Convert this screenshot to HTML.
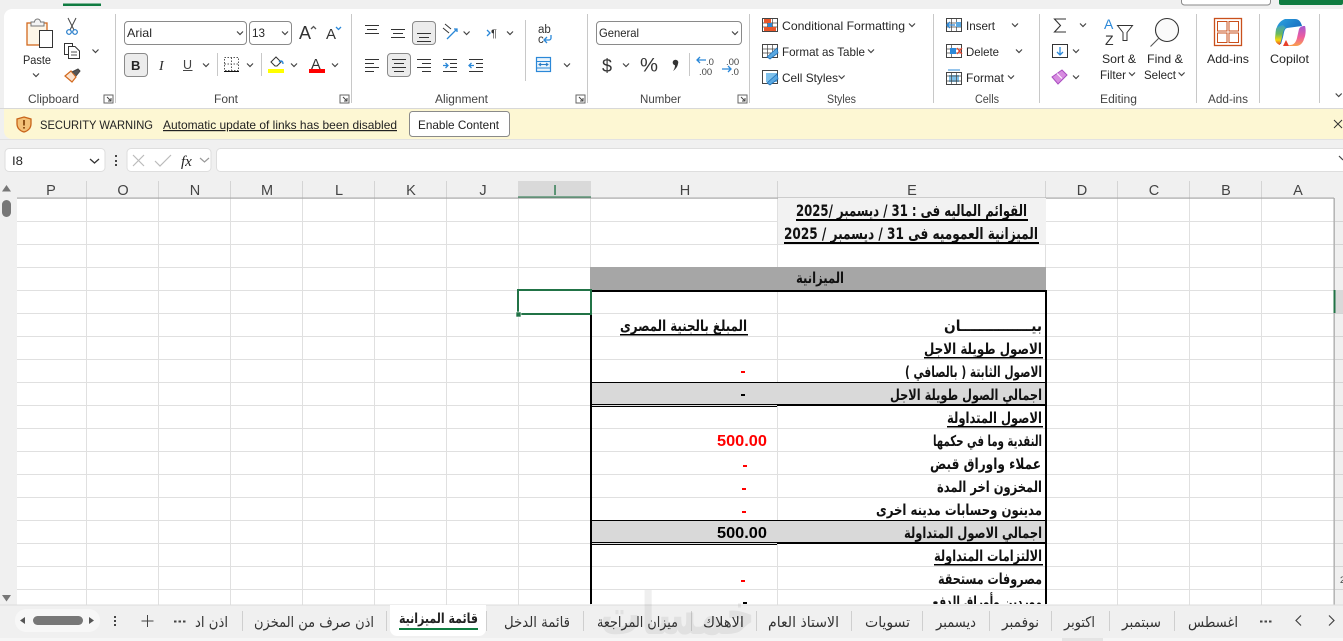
<!DOCTYPE html>
<html lang="en"><head><meta charset="utf-8"><title>Excel</title>
<style>
html,body{margin:0;padding:0;width:1343px;height:641px;overflow:hidden;background:#f0f0f0}
svg{display:block;position:absolute;left:0;top:0}
text{font-family:"Liberation Sans","DejaVu Sans",sans-serif;fill:#262626;font-size:12px}
.g{fill:#444;font-size:11.5px}
.h{fill:#444;font-size:14.5px;text-anchor:middle}
.a{font-family:"DejaVu Sans","Liberation Sans",sans-serif;font-weight:bold;fill:#111;font-size:15px;direction:rtl;text-anchor:start;unicode-bidi:plaintext}
.t{font-family:"DejaVu Sans","Liberation Sans",sans-serif;fill:#333;font-size:14.5px;direction:rtl;text-anchor:start}
.n{font-family:"Liberation Sans",sans-serif;font-weight:bold;font-size:15.5px}
.l{stroke:#333;stroke-width:1;fill:none}
.b{stroke:#2b88d8;stroke-width:1.3;fill:none}
.c{stroke:#444;stroke-width:1.2;fill:none}
.s{stroke:#c8c8c8;stroke-width:1}
.gr{stroke:#e0e0e0;stroke-width:1}
.hs{stroke:#d4d4d4;stroke-width:1}
.ts{stroke:#cfcfcf;stroke-width:1}
</style></head><body>
<svg width="1343" height="641" viewBox="0 0 1343 641" xmlns="http://www.w3.org/2000/svg">
<defs>
<polyline id="cv" points="-3,-1.5 0,1.5 3,-1.5" class="c"/>
<g id="dl"><rect x="0" y="0" width="9" height="8" fill="none" stroke="#666"/><path d="M3 2l4 4M7 3v3h-3" stroke="#444" fill="none"/></g>
<linearGradient id="cb" x1="0" y1="0" x2="1" y2="1"><stop offset="0" stop-color="#2ca6e0"/><stop offset=".5" stop-color="#1d7ac8"/><stop offset="1" stop-color="#1a5fb0"/></linearGradient>
<linearGradient id="cl" x1="0" y1="0" x2="0" y2="1"><stop offset="0" stop-color="#3aa0c8"/><stop offset=".45" stop-color="#6cba5a"/><stop offset=".75" stop-color="#f4d90e"/><stop offset="1" stop-color="#e8402a"/></linearGradient>
<linearGradient id="cr" x1="0" y1="0" x2="0" y2="1"><stop offset="0" stop-color="#a85ad0"/><stop offset=".55" stop-color="#ee5ca0"/><stop offset="1" stop-color="#f9a04a"/></linearGradient>
<clipPath id="gc"><rect x="0" y="198" width="1343" height="406"/></clipPath>
</defs>

<!-- top strip -->
<rect width="1343" height="9" fill="#f0f0f0"/>
<rect x="63" y="3.500" width="38" height="2.500" fill="#107c41"/>
<rect x="1181.500" y="-6" width="89" height="11" rx="3" fill="#fff" stroke="#8a8a8a"/>
<rect x="1279" y="-4" width="64" height="9" rx="2" fill="#107c41"/>

<!-- ribbon -->
<path d="M4 108V17a8 8 0 0 1 8-8H1343V108Z" fill="#fff"/>
<rect x="0" y="108" width="1343" height="1" fill="#d8d8d8"/>
<path d="M4 109H1343V139H12a8 8 0 0 1-8-8Z" fill="#fdf7d3"/>
<rect x="0" y="139" width="1343" height="1" fill="#e2e2e2"/>

<!-- separators -->
<path class="s" d="M115.500 14V103M351.500 14V103M587.500 14V103M749.500 14V103M933.500 14V103M1039.500 14V103M1196.500 14V103M1259.500 14V103M1319.500 14V103"/>
<path class="s" d="M217.500 53V76M261.500 53V76M525.500 20V81M689.500 53V76"/>

<!-- Group labels -->
<text class="g" x="28" y="103" textLength="51" lengthAdjust="spacingAndGlyphs">Clipboard</text>
<text class="g" x="214" y="103" textLength="24" lengthAdjust="spacingAndGlyphs">Font</text>
<text class="g" x="435" y="103" textLength="53" lengthAdjust="spacingAndGlyphs">Alignment</text>
<text class="g" x="640" y="103" textLength="41" lengthAdjust="spacingAndGlyphs">Number</text>
<text class="g" x="827" y="103" textLength="29" lengthAdjust="spacingAndGlyphs">Styles</text>
<text class="g" x="975" y="103" textLength="24" lengthAdjust="spacingAndGlyphs">Cells</text>
<text class="g" x="1100" y="103" textLength="37" lengthAdjust="spacingAndGlyphs">Editing</text>
<text class="g" x="1208" y="103" textLength="40" lengthAdjust="spacingAndGlyphs">Add-ins</text>
<use href="#dl" x="104" y="95"/><use href="#dl" x="340" y="95"/><use href="#dl" x="576" y="95"/><use href="#dl" x="738" y="95"/>

<!-- Clipboard -->
<rect x="27" y="23" width="20" height="22" fill="#fdf6e8" stroke="#d2691e" stroke-width="1.300"/>
<path d="M31 26v-4h3.500a3 3 0 0 1 6 0H44v4Z" fill="#f4f4f4" stroke="#777"/>
<rect x="39.500" y="30.500" width="13" height="17" fill="#fff" stroke="#333"/>
<text x="23" y="64" textLength="28" lengthAdjust="spacingAndGlyphs">Paste</text>
<use href="#cv" x="36" y="75"/>
<path d="M68 18l6 12M76 18l-6 12" stroke="#444" fill="none"/>
<circle cx="69" cy="32" r="2.300" fill="none" stroke="#1f78c8" stroke-width="1.200"/><circle cx="75" cy="32" r="2.300" fill="none" stroke="#1f78c8" stroke-width="1.200"/>
<path d="M68.500 54.500H64.500V43.500H72.500V46" fill="none" stroke="#333"/>
<path d="M68.500 46.500H75L79.500 51V58.500H68.500Z" fill="#fff" stroke="#333"/><path d="M71 52h6M71 55h6" stroke="#555"/>
<use href="#cv" x="95.500" y="51"/>
<path d="M65 76l6-5 5 6-4 5Z" fill="#fbe3cf" stroke="#d2691e" stroke-width="1.200"/>
<path d="M72 72l6-3 2 2-4 5" fill="#555" stroke="#444"/>

<!-- Font -->
<rect x="124.500" y="21.500" width="122" height="23" rx="3.500" fill="#fff" stroke="#8a8a8a"/>
<text x="127" y="37" textLength="25" lengthAdjust="spacingAndGlyphs" fill="#222">Arial</text><use href="#cv" x="240" y="33"/>
<rect x="249.500" y="21.500" width="42" height="23" rx="3.500" fill="#fff" stroke="#8a8a8a"/>
<text x="252" y="37" textLength="13" lengthAdjust="spacingAndGlyphs">13</text><use href="#cv" x="285" y="33"/>
<text x="299" y="39" style="font-size:18px;fill:#333">A</text><path d="M311 29l2.500-2.500 2.500 2.500" class="b" style="stroke:#555"/>
<text x="326" y="39" style="font-size:15px;fill:#333">A</text><path d="M336 27l2.500 2.500 2.500-2.500" class="b"/>
<rect x="124.500" y="53.500" width="23" height="23" rx="3.500" fill="#ececec" stroke="#8a8a8a"/>
<text x="131" y="70" style="font-size:13px;font-weight:bold">B</text>
<text x="159" y="70" style="font-size:14px;font-style:italic;font-family:'Liberation Serif',serif">I</text>
<text x="183" y="69" style="font-size:12.500px;fill:#444">U</text><path d="M183 70.500h9.500" stroke="#444"/>
<use href="#cv" x="206" y="65"/>
<path d="M224.500 57.500h14v13h-14ZM231.500 57.500v13M224.500 64h14" stroke="#555" stroke-dasharray="1.500 1.500" fill="none"/><path d="M224 71.500h15" stroke="#111"/>
<use href="#cv" x="250" y="65"/>
<path d="M271 62l5-5 5 5-4 4h-2Z" fill="#fff" stroke="#333"/><path d="M279 62c2-2 4-1 4 2" stroke="#2b88d8" stroke-width="1.300" fill="none"/><rect x="268" y="69" width="16" height="4" fill="#ffff00"/>
<use href="#cv" x="294" y="65"/>
<text x="311" y="69" style="font-size:14.500px;fill:#333">A</text><rect x="309" y="69" width="16" height="4" fill="#ff0000"/>
<use href="#cv" x="335" y="65"/>

<!-- Alignment -->
<path class="l" d="M365 25.500h14M367 29.500h10M365 33.500h14"/>
<path class="l" d="M391 29.500h14M393 33.500h10M391 37.500h14"/>
<rect x="412.500" y="21.500" width="23" height="23" rx="3.500" fill="#ececec" stroke="#8a8a8a"/>
<path class="l" d="M417 33.500h14M419 37.500h10M417 41.500h14"/>
<path class="l" d="M443 28l6 5M445 24l6 5" /><path class="b" d="M447 39l10-10M454 29h3v3"/>
<use href="#cv" x="466.600" y="33"/>
<path class="b" d="M487 30l3 3-3 3"/><text x="491" y="37" style="font-size:11px;fill:#333">¶</text>
<use href="#cv" x="510" y="33"/>
<path class="l" d="M365 59.500h14M365 63.500h9M365 67.500h14M365 71.500h9"/>
<rect x="387.500" y="53.500" width="23" height="23" rx="3.500" fill="#ececec" stroke="#8a8a8a"/>
<path class="l" d="M392 59.500h14M394 63.500h10M392 67.500h14M394 71.500h10"/>
<path class="l" d="M417 59.500h14M422 63.500h9M417 67.500h14M422 71.500h9"/>
<path class="l" d="M443 59.500h14M450 63.500h7M450 67.500h7M443 71.500h14"/><path class="b" d="M443 65.500h5M445.500 63l2.500 2.500-2.500 2.500"/>
<path class="l" d="M469 59.500h14M476 63.500h7M476 67.500h7M469 71.500h14"/><path class="b" d="M474 65.500h-5M471.500 63l-2.500 2.500 2.500 2.500"/>
<text x="538" y="33" style="font-size:11.500px;fill:#333">ab</text><text x="538" y="43" style="font-size:11.500px;fill:#333">c</text>
<path class="b" d="M551 35v3a2 2 0 0 1-2 2h-5M547 37l-3 3 3 3"/>
<rect x="536.500" y="57.500" width="14" height="14" fill="#eaf4fc" stroke="#2b88d8" stroke-width="1.200"/><path class="b" d="M536 61.500h15M536 68h15" style="stroke-width:1"/><path d="M539 64.500h9M541 63l-2 1.500 2 1.500M546 63l2 1.500-2 1.500" stroke="#2b7cc4" fill="none"/>
<use href="#cv" x="567" y="65"/>

<!-- Number -->
<rect x="596.500" y="21.500" width="145" height="23" rx="3.500" fill="#fff" stroke="#8a8a8a"/>
<text x="599" y="37" textLength="40" lengthAdjust="spacingAndGlyphs">General</text><use href="#cv" x="735" y="33"/>
<text x="602" y="72" style="font-size:18px;fill:#333">$</text><use href="#cv" x="626" y="65"/>
<text x="640" y="71.500" textLength="18" lengthAdjust="spacingAndGlyphs" style="font-size:19px;fill:#333">%</text>
<circle cx="675.500" cy="62.500" r="2.800" fill="#333"/><path d="M678 63c0 3-2 6-5 8 1.500-2 2-4 2-6Z" fill="#333"/>
<path class="b" d="M706 60h-9M700 57l-3 3 3 3"/><text x="706" y="65" style="font-size:9.500px;fill:#444">.0</text><text x="699" y="75" style="font-size:9.500px;fill:#444">.00</text>
<text x="726" y="65" style="font-size:9.500px;fill:#444">.00</text><path class="b" d="M722 69h9M728 66l3 3-3 3"/><text x="731" y="75" style="font-size:9.500px;fill:#444">.0</text>

<!-- Styles -->
<rect x="762.500" y="18.500" width="15" height="13" fill="#fff" stroke="#444"/><path d="M767.500 18v14M772.500 18v14M762 23h16M762 27h16" stroke="#444" stroke-width=".7"/><rect x="764" y="19" width="7" height="4" fill="#e8562a"/><rect x="764" y="27" width="12" height="4" fill="#e8562a"/><rect x="768" y="23" width="4" height="4" fill="#2b88d8"/>
<text x="782" y="30" textLength="123" lengthAdjust="spacingAndGlyphs">Conditional Formatting</text><use href="#cv" x="912" y="25"/>
<rect x="762.500" y="44.500" width="15" height="13" fill="#fff" stroke="#444"/><path d="M767.500 44v14M772.500 44v14M762 49h16M762 53h16" stroke="#444" stroke-width=".7"/><path d="M767 57l10-9 1 5-8 6Z" fill="#5aa8e0" stroke="#1f70b8" stroke-width=".8"/>
<text x="782" y="56" textLength="83" lengthAdjust="spacingAndGlyphs">Format as Table</text><use href="#cv" x="871" y="51"/>
<rect x="762.500" y="70.500" width="15" height="13" fill="#fff" stroke="#444"/><path d="M766 73h11v9h-11Z" fill="#7ec0ea"/><path d="M767 83l10-9 1 5-8 6Z" fill="#5aa8e0" stroke="#1f70b8" stroke-width=".8"/>
<text x="782" y="82" textLength="56" lengthAdjust="spacingAndGlyphs">Cell Styles</text><use href="#cv" x="841.600" y="77"/>

<!-- Cells -->
<rect x="946.500" y="18.500" width="15" height="13" fill="#fff" stroke="#444"/><path d="M946 23h16M946 27h16M951.500 18v14M956.500 18v14" stroke="#444" stroke-width=".7"/><rect x="956" y="22" width="5" height="5" fill="#5aa8e0"/><path class="b" d="M955 25h-8M950 22l-3 3 3 3"/>
<text x="966" y="30" textLength="29" lengthAdjust="spacingAndGlyphs">Insert</text><use href="#cv" x="1015" y="25"/>
<rect x="946.500" y="44.500" width="15" height="13" fill="#fff" stroke="#444"/><path d="M946 49h16M946 53h16M951.500 44v14" stroke="#444" stroke-width=".7"/><rect x="950" y="48" width="6" height="6" fill="#2b88d8"/><path d="M957 48l5 6M962 48l-5 6" stroke="#e8402a" stroke-width="1.200"/>
<text x="966" y="56" textLength="33" lengthAdjust="spacingAndGlyphs">Delete</text><use href="#cv" x="1019" y="51"/>
<rect x="946.500" y="72.500" width="15" height="12" fill="#fff" stroke="#444"/><rect x="949" y="75" width="10" height="7" fill="#7ec0ea"/><path d="M948 70h12" stroke="#2b88d8"/><path d="M946 76h16M946 81h16M951.500 72v12M956.500 72v12" stroke="#444" stroke-width=".7"/>
<text x="966" y="82" textLength="38" lengthAdjust="spacingAndGlyphs">Format</text><use href="#cv" x="1011" y="77"/>

<!-- Editing -->
<path d="M1066 19h-11.500l6 6.500-6 6.500H1066" fill="none" stroke="#333" stroke-width="1.100"/><use href="#cv" x="1083" y="25"/>
<rect x="1052.500" y="44.500" width="15" height="13" fill="#fff" stroke="#333"/><path class="b" d="M1060 47v8M1057 52l3 3 3-3"/><use href="#cv" x="1076" y="51"/>
<path d="M1052 77l10-7 5 5-9 9Z" fill="#d78ce0" stroke="#a94cc0"/><path d="M1057 73.500l5 5" stroke="#fff"/><use href="#cv" x="1076" y="77"/>
<text x="1104" y="29" style="font-size:14px;fill:#2b88d8">A</text><text x="1105" y="45" style="font-size:14px;fill:#333">Z</text>
<path d="M1117.500 25.500h15l-5.500 7v8h-4v-8Z" fill="#fff" stroke="#333"/>
<text x="1102" y="63" textLength="34" lengthAdjust="spacingAndGlyphs">Sort &amp;</text>
<text x="1100" y="79" textLength="26" lengthAdjust="spacingAndGlyphs">Filter</text><use href="#cv" x="1132" y="74"/>
<circle cx="1167" cy="30" r="11.500" fill="#fafafa" stroke="#333" stroke-width="1.100"/><path d="M1158.500 38.500l-8 8" stroke="#555" stroke-width="1.100"/>
<text x="1147" y="63" textLength="36" lengthAdjust="spacingAndGlyphs">Find &amp;</text>
<text x="1144" y="79" textLength="32" lengthAdjust="spacingAndGlyphs">Select</text><use href="#cv" x="1181.600" y="74"/>

<!-- Add-ins -->
<rect x="1214.500" y="18.500" width="27" height="27" fill="#fff" stroke="#c9501c" stroke-width="1.300"/>
<rect x="1217.500" y="21.500" width="9.500" height="9.500" fill="none" stroke="#c9501c"/><rect x="1229" y="21.500" width="9.500" height="9.500" fill="none" stroke="#c9501c"/><rect x="1217.500" y="33" width="9.500" height="9.500" fill="none" stroke="#c9501c"/><rect x="1229" y="33" width="9.500" height="9.500" fill="none" stroke="#c9501c"/>
<text x="1207" y="63" textLength="42" lengthAdjust="spacingAndGlyphs">Add-ins</text>

<!-- Copilot -->
<path d="M1276 38c-1-8 1-16 9-19h10c4 0 6 3 7 7l-15 2c-3 1-3 5-4 9l-2 7h-3c-1-2-2-4-2-6Z" fill="url(#cb)"/>
<path d="M1276 29c1-2 3-3 7-4l3 3c-3 1-3 5-4 9l-2 8c-3-1-5-3-5-7Z" fill="url(#cl)"/>
<path d="M1290 45c4 0 6-3 7-7l2-9c1-2 3-3 5-3h1c1 3 1 9-1 13-1 4-4 7-8 7h-9l3-1Z" fill="url(#cr)"/>
<path d="M1283 46l3-6 3 6Z" fill="#e8402a"/>
<text x="1270" y="63" textLength="39" lengthAdjust="spacingAndGlyphs">Copilot</text>
<use href="#cv" x="1338.700" y="95"/>

<!-- warning bar -->
<path d="M24 117l7 2v5c0 4-3 7-7 8-4-1-7-4-7-8v-5Z" fill="#f3c178" stroke="#c8641a" stroke-width="1.300"/>
<rect x="23.200" y="120" width="1.600" height="5.500" fill="#7a3b00"/><rect x="23.200" y="127" width="1.600" height="1.600" fill="#7a3b00"/>
<text x="40" y="129" textLength="113" lengthAdjust="spacingAndGlyphs" style="fill:#222">SECURITY WARNING</text>
<text x="163" y="129" textLength="234" lengthAdjust="spacingAndGlyphs" text-decoration="underline" style="fill:#222">Automatic update of links has been disabled</text>
<rect x="409.500" y="111.500" width="100" height="25" rx="3" fill="#fff" stroke="#8a8a8a"/>
<text x="418" y="129" textLength="81" lengthAdjust="spacingAndGlyphs" style="fill:#222">Enable Content</text>
<path d="M1334 120l8 8M1342 120l-8 8" stroke="#333" fill="none"/>

<!-- formula bar -->
<rect x="5" y="148.500" width="100" height="23" rx="4" fill="#fff" stroke="#dedede"/>
<text x="12" y="165" textLength="11" lengthAdjust="spacingAndGlyphs">I8</text>
<polyline points="90,159 94.500,163 99,159" fill="none" stroke="#333" stroke-width="1.300"/>
<rect x="115" y="155" width="2" height="2" fill="#444"/><rect x="115" y="160" width="2" height="2" fill="#444"/><rect x="115" y="164" width="2" height="2" fill="#444"/>
<rect x="127" y="148.500" width="84" height="23" rx="4" fill="#fff" stroke="#dedede"/>
<path d="M133 155l11 11M144 155l-11 11" stroke="#bbb" stroke-width="1.200"/>
<path d="M155 161l5 5 11-11" stroke="#bbb" stroke-width="1.200" fill="none"/>
<text x="181" y="166" style="font-size:15px;font-style:italic;font-family:'Liberation Serif',serif;fill:#222">fx</text>
<polyline points="200,158 204.500,162 209,158" fill="none" stroke="#999" stroke-width="1.200"/>
<rect x="216.500" y="148.500" width="1135" height="23" rx="4" fill="#fff" stroke="#dedede"/>
<polyline points="1339,156 1343,160" fill="none" stroke="#444" stroke-width="1.200"/>

<!-- headers -->
<rect x="0" y="180" width="1343" height="18" fill="#f0f0f0"/>
<path class="hs" d="M86.500 181V198M158.500 181V198M230.500 181V198M302.500 181V198M374.500 181V198M446.500 181V198M518.500 181V198M590.500 181V198M777.500 181V198M1045.500 181V198M1117.500 181V198M1189.500 181V198M1261.500 181V198"/>
<rect x="518" y="181" width="73" height="16" fill="#d9d9d9"/>
<rect x="518" y="196.500" width="73" height="2" fill="#217346"/>
<text class="h" x="51" y="195">P</text><text class="h" x="123" y="195">O</text><text class="h" x="195" y="195">N</text><text class="h" x="267" y="195">M</text><text class="h" x="339" y="195">L</text><text class="h" x="411" y="195">K</text><text class="h" x="483" y="195">J</text><text class="h" x="555" y="195" style="fill:#217346">I</text><text class="h" x="685" y="195">H</text><text class="h" x="912" y="195">E</text><text class="h" x="1082" y="195">D</text><text class="h" x="1154" y="195">C</text><text class="h" x="1226" y="195">B</text><text class="h" x="1298" y="195">A</text>
<path d="M1337 184v12h6v-6Z" fill="#dcdcdc"/>

<!-- sheet -->
<rect x="17" y="198" width="1317" height="407" fill="#fff"/>
<path class="gr" d="M17 221.500H1334M17 244.500H1334M17 267.500H1334M17 290.500H1334M17 313.500H1334M17 336.500H1334M17 359.500H1334M17 382.500H1334M17 405.500H1334M17 428.500H1334M17 451.500H1334M17 474.500H1334M17 497.500H1334M17 520.500H1334M17 543.500H1334M17 566.500H1334M17 589.500H1334"/>
<path class="gr" d="M86.500 198V605M158.500 198V605M230.500 198V605M302.500 198V605M374.500 198V605M446.500 198V605M518.500 198V605M590.500 198V605M777.500 198V605M1045.500 198V605M1117.500 198V605M1189.500 198V605M1261.500 198V605"/>
<rect x="17" y="197.500" width="1317" height="1.200" fill="#a8a8a8"/>

<!-- right row header -->
<rect x="1334" y="181" width="9" height="424" fill="#f0f0f0"/>
<rect x="1333.500" y="198" width="1.300" height="407" fill="#a8a8a8"/>
<path class="hs" d="M1335 221.500h8M1335 244.500h8M1335 267.500h8M1335 290.500h8M1335 313.500h8M1335 336.500h8M1335 359.500h8M1335 382.500h8M1335 405.500h8M1335 428.500h8M1335 451.500h8M1335 474.500h8M1335 497.500h8M1335 520.500h8M1335 543.500h8M1335 566.500h8M1335 589.500h8"/>
<rect x="1334" y="290" width="9" height="23" fill="#d9d9d9"/><rect x="1333.500" y="290" width="2" height="23" fill="#217346"/>
<text x="1340" y="583" style="font-size:9px;fill:#444">2</text>

<!-- fills -->
<rect x="778" y="198" width="268" height="46" fill="#f2f2f2"/>
<rect x="590" y="267" width="456" height="23" fill="#a6a6a6"/>
<rect x="591" y="382" width="455" height="23" fill="#d9d9d9"/>
<rect x="591" y="520" width="455" height="23" fill="#d9d9d9"/>

<g clip-path="url(#gc)">
<!-- table borders -->
<rect x="590" y="290" width="457" height="2" fill="#000"/>
<rect x="590" y="290" width="2" height="320" fill="#000"/>
<rect x="1045" y="290" width="2" height="320" fill="#000"/>
<rect x="591" y="382" width="455" height="1" fill="#000"/>
<rect x="777" y="404" width="269" height="2" fill="#000"/>
<rect x="591" y="404" width="186" height="1" fill="#000"/><rect x="591" y="406" width="186" height="1" fill="#000"/>
<rect x="591" y="520" width="455" height="1" fill="#000"/>
<rect x="777" y="542" width="269" height="2" fill="#000"/>
<rect x="591" y="542" width="186" height="1" fill="#000"/><rect x="591" y="544" width="186" height="1" fill="#000"/>

<!-- cell text -->
<text class="a" x="1027" y="216" textLength="231" lengthAdjust="spacingAndGlyphs" style="font-size:16px">القوائم الماليه فى : 31 / ديسمبر /2025</text>
<rect x="796" y="219" width="232" height="2" fill="#000"/>
<text class="a" x="1038" y="239" textLength="254" lengthAdjust="spacingAndGlyphs" style="font-size:16px">الميزانية العموميه فى  31 / ديسمبر / 2025</text>
<rect x="784" y="242" width="255" height="2" fill="#000"/>
<text class="a" x="844" y="283" textLength="48" lengthAdjust="spacingAndGlyphs">الميزانية</text>
<text class="a" x="1042" y="331" textLength="98" lengthAdjust="spacingAndGlyphs">بيـــــــــــــــان</text>
<text class="a" x="747" y="331" textLength="127" lengthAdjust="spacingAndGlyphs">المبلغ بالجنية المصرى</text>
<rect x="620" y="334" width="128" height="1.500" fill="#000"/>
<text class="a" x="1042" y="354" textLength="118" lengthAdjust="spacingAndGlyphs">الاصول طويلة الاجل</text>
<rect x="924" y="357" width="119" height="1.500" fill="#000"/>
<text class="a" x="1042" y="377" textLength="137" lengthAdjust="spacingAndGlyphs">الاصول الثابتة ( بالصافي )</text>
<rect x="741" y="371" width="4" height="2" fill="#f00"/>
<text class="a" x="1042" y="400" textLength="152" lengthAdjust="spacingAndGlyphs">اجمالي الصول طويلة الاجل</text>
<rect x="741" y="394" width="4" height="2" fill="#000"/>
<text class="a" x="1042" y="423" textLength="95" lengthAdjust="spacingAndGlyphs">الاصول المتداولة</text>
<rect x="947" y="426" width="96" height="1.500" fill="#000"/>
<text class="a" x="1042" y="446" textLength="109" lengthAdjust="spacingAndGlyphs">النقدية وما في حكمها</text>
<text class="n" x="717" y="446" textLength="50" lengthAdjust="spacingAndGlyphs" style="fill:#f00">500.00</text>
<text class="a" x="1041" y="469" textLength="111" lengthAdjust="spacingAndGlyphs">عملاء واوراق قبض</text>
<rect x="743" y="465" width="4" height="2" fill="#f00"/>
<text class="a" x="1042" y="492" textLength="105" lengthAdjust="spacingAndGlyphs">المخزون اخر المدة</text>
<rect x="742" y="488" width="4" height="2" fill="#f00"/>
<text class="a" x="1042" y="515" textLength="166" lengthAdjust="spacingAndGlyphs">مدينون وحسابات مدينه اخرى</text>
<rect x="742" y="511" width="4" height="2" fill="#f00"/>
<text class="a" x="1042" y="538" textLength="138" lengthAdjust="spacingAndGlyphs">اجمالي الاصول المتداولة</text>
<text class="n" x="717" y="538" textLength="50" lengthAdjust="spacingAndGlyphs" style="fill:#000">500.00</text>
<text class="a" x="1042" y="561" textLength="108" lengthAdjust="spacingAndGlyphs">الالتزامات المتداولة</text>
<rect x="934" y="564" width="109" height="1.500" fill="#000"/>
<text class="a" x="1042" y="584" textLength="104" lengthAdjust="spacingAndGlyphs">مصروفات مستحقة</text>
<rect x="741" y="580" width="4" height="2" fill="#f00"/>
<text class="a" x="1042" y="607" textLength="110" lengthAdjust="spacingAndGlyphs">موردين وأوراق الدفع</text>
<rect x="743" y="602" width="4" height="2" fill="#000"/>

<!-- selection -->
<rect x="518" y="290" width="73" height="24" fill="none" stroke="#217346" stroke-width="2"/>
<rect x="516" y="312" width="5" height="5" fill="#217346" stroke="#fff" stroke-width=".6"/>
</g>

<!-- vertical scrollbar -->
<rect x="0" y="180" width="17" height="425" fill="#f0f0f0"/>
<path d="M2 191.500L6.500 185 11 191.500Z" fill="#777"/>
<rect x="2" y="200" width="9" height="17" rx="4.500" fill="#777"/>
<path d="M2 595L6.500 601.500 11 595Z" fill="#777"/>

<!-- tab bar -->
<rect x="0" y="605" width="1343" height="33" fill="#f0f0f0"/>
<rect x="0" y="604.500" width="1343" height="1" fill="#dcdcdc"/>
<rect x="0" y="638" width="1343" height="3" fill="#f6f6f6"/>
<rect x="1062" y="638" width="41" height="3" fill="#e4e4e4"/>
<path class="ts" d="M242.500 611V631M386.500 611V631M486.500 611V631M583.500 611V631M691.500 611V631M756.500 611V631M851.500 611V631M922.500 611V631M989.500 611V631M1051.500 611V631M1109.500 611V631M1174.500 611V631"/>

<text x="755" y="634" textLength="155" lengthAdjust="spacingAndGlyphs" style="font-family:'DejaVu Sans',sans-serif;font-size:58px;font-weight:bold;fill:#000;opacity:.06;direction:rtl;text-anchor:start">خمسات</text>

<path d="M390 605H486V629a7 7 0 0 1-7 7H397a7 7 0 0 1-7-7Z" fill="#fff"/>
<text class="t" x="478" y="623" textLength="79" lengthAdjust="spacingAndGlyphs" style="font-weight:bold;fill:#222;font-size:14px">قائمة الميزانية</text>
<rect x="399" y="628" width="79" height="2" fill="#107c41"/>

<text class="t" x="1238" y="627" textLength="50" lengthAdjust="spacingAndGlyphs">اغسطس</text>
<text class="t" x="1161" y="627" textLength="39" lengthAdjust="spacingAndGlyphs">سبتمبر</text>
<text class="t" x="1095" y="627" textLength="31" lengthAdjust="spacingAndGlyphs">اكتوبر</text>
<text class="t" x="1039" y="627" textLength="37" lengthAdjust="spacingAndGlyphs">نوفمبر</text>
<text class="t" x="976" y="627" textLength="40" lengthAdjust="spacingAndGlyphs">ديسمبر</text>
<text class="t" x="910" y="627" textLength="45" lengthAdjust="spacingAndGlyphs">تسويات</text>
<text class="t" x="839" y="627" textLength="71" lengthAdjust="spacingAndGlyphs">الاستاذ العام</text>
<text class="t" x="744" y="627" textLength="41" lengthAdjust="spacingAndGlyphs">الاهلاك</text>
<text class="t" x="678" y="627" textLength="81" lengthAdjust="spacingAndGlyphs">ميزان المراجعة</text>
<text class="t" x="570" y="627" textLength="66" lengthAdjust="spacingAndGlyphs">قائمة الدخل</text>
<text class="t" x="374" y="627" textLength="120" lengthAdjust="spacingAndGlyphs">اذن صرف من المخزن</text>
<text class="t" x="228" y="627" textLength="33" lengthAdjust="spacingAndGlyphs">اذن اد</text>

<rect x="15" y="609" width="85" height="23" rx="11" fill="#f7f7f7"/>
<path d="M25 617v7l-5-3.500Z" fill="#555"/><rect x="33" y="616" width="50" height="9" rx="4.500" fill="#777"/><path d="M89 617v7l5-3.500Z" fill="#555"/>
<rect x="114" y="616" width="2" height="2" fill="#444"/><rect x="114" y="620" width="2" height="2" fill="#444"/><rect x="114" y="624" width="2" height="2" fill="#444"/>
<path d="M147.500 615v12M141.500 621h12" stroke="#444" fill="none"/>
<path d="M174 620.500h2.500v2H174ZM178.500 620.500h2.500v2h-2.500ZM183 620.500h2.500v2H183Z" fill="#444"/>
<path d="M1260 620.500h2.500v2H1260ZM1264.500 620.500h2.500v2h-2.500ZM1269 620.500h2.500v2H1269Z" fill="#444"/>
<polyline points="1301,615.500 1296,620.500 1301,625.500" fill="none" stroke="#444" stroke-width="1.200"/>
<polyline points="1329,615.500 1334,620.500 1329,625.500" fill="none" stroke="#444" stroke-width="1.200"/>
</svg>
</body></html>
